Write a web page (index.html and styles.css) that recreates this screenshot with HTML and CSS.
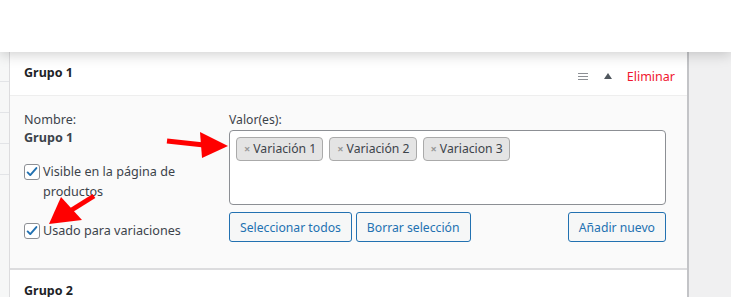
FILE: index.html
```html
<!DOCTYPE html>
<html lang="es">
  <head>
    <meta charset="UTF-8" />
    <meta name="viewport" content="width=device-width, initial-scale=1.0" />
    <title>Atributos</title>
    <link rel="stylesheet" href="styles.css">
  </head>
  <body>
    <div class="topbar"></div>

    <div class="main">
      <div class="side">
        <div class="side-row"></div>
        <div class="side-row"></div>
        <div class="side-row"></div>
        <div class="side-row"></div>
      </div>

      <div class="panel">
        <div class="attr">
          <div class="attr-head">
            <strong>Grupo 1</strong>
            <div class="actions">
              <span class="handle"><i></i><i></i><i></i></span>
              <span class="toggle"></span>
              <a href="#" class="delete">Eliminar</a>
            </div>
          </div>

          <div class="attr-body">
            <div class="col-name">
              <div>Nombre:</div>
              <div class="name">Grupo 1</div>
              <label class="check first">
                <span class="box"><svg viewBox="0 0 16 16" width="14" height="14"><path d="M3 8.5l3 3 7-8" fill="none" stroke="#2271b1" stroke-width="2.2" stroke-linecap="round" stroke-linejoin="round"/></svg></span>
                <span>Visible en la página de productos</span>
              </label>
              <label class="check second">
                <span class="box"><svg viewBox="0 0 16 16" width="14" height="14"><path d="M3 8.5l3 3 7-8" fill="none" stroke="#2271b1" stroke-width="2.2" stroke-linecap="round" stroke-linejoin="round"/></svg></span>
                <span>Usado para variaciones</span>
              </label>
            </div>

            <div class="col-values">
              <div>Valor(es):</div>
              <div class="values">
                <span class="tag"><b>×</b>Variación 1</span>
                <span class="tag"><b>×</b>Variación 2</span>
                <span class="tag"><b>×</b>Variacion 3</span>
              </div>
              <div class="buttons">
                <button>Seleccionar todos</button>
                <button>Borrar selección</button>
                <button class="add">Añadir nuevo</button>
              </div>
            </div>
          </div>
        </div>

        <div class="attr">
          <div class="attr-head">
            <strong>Grupo 2</strong>
          </div>
        </div>
      </div>
    </div>

    <svg class="arrows" width="731" height="297" viewBox="0 0 731 297">
      <line x1="167" y1="141" x2="204" y2="145" stroke="#f00" stroke-width="5" />
      <polygon points="200,132 228,146 202,158" fill="#f00" />
      <line x1="94" y1="196" x2="70" y2="211" stroke="#f00" stroke-width="5" />
      <polygon points="61,197 82,220 49,224" fill="#f00" />
    </svg>
  </body>
</html>
```

FILE: styles.css
```css
body {
  margin: 0;
  background: #f0f0f1;
  font-family: "Noto Sans", "Open Sans", sans-serif;
  font-size: 12.2px;
  color: #3c434a;
  position: relative;
  height: 297px;
  overflow: hidden;
}
.topbar {
  height: 52px;
  background: #fff;
  box-shadow: 0 3px 12px rgba(0, 0, 0, 0.18);
  position: relative;
  z-index: 2;
}
.main {
  display: flex;
}
.side {
  width: 9px;
  background: #f6f7f7;
}
.side-row {
  height: 30px;
  border-bottom: 1px solid #e2e4e7;
}
.side-row:first-child {
  height: 29px;
}
.panel {
  width: 677px;
  background: #fff;
  border-left: 1px solid #dcdcde;
  border-right: 2px solid #c3c4c7;
}
.attr + .attr {
  border-top: 2px solid #dcdcde;
}
.attr-head {
  height: 43px;
  display: flex;
  align-items: center;
  justify-content: space-between;
  padding: 0 12px 0 14px;
  border-bottom: 1px solid #eee;
}
.attr-head strong {
  color: #1d2327;
  font-size: 12.5px;
  margin-top: -3px;
}
.attr + .attr .attr-head {
  height: 40px;
  border-bottom: 0;
}
.attr + .attr .attr-head strong {
  margin-top: 0;
}
.actions {
  display: flex;
  align-items: center;
  margin-top: 6px;
}
.handle {
  display: flex;
  flex-direction: column;
  gap: 2px;
  width: 10px;
  margin-right: 16px;
}
.handle i {
  height: 1px;
  background: #8c8f94;
}
.toggle {
  width: 0;
  height: 0;
  border-left: 4px solid transparent;
  border-right: 4px solid transparent;
  border-bottom: 6px solid #50575e;
  margin-right: 15px;
  margin-top: -2px;
}
.delete {
  color: #f0162f;
  text-decoration: none;
  font-size: 12.5px;
}
.attr-body {
  display: flex;
  background: #fafafa;
  padding: 15px 21px 26px 14px;
  line-height: 18px;
}
.col-name {
  width: 205px;
  flex: none;
  font-size: 12.6px;
}
.name {
  font-weight: bold;
}
.check {
  display: flex;
  align-items: flex-start;
  line-height: 20px;
  width: 158px;
}
.check.first {
  margin-top: 15px;
}
.check.second {
  margin-top: 19px;
  width: 200px;
}
.box {
  width: 14px;
  height: 14px;
  border: 1px solid #8c8f94;
  border-radius: 3px;
  background: #fff;
  flex: none;
  margin: 2px 3px 0 0;
  display: flex;
  align-items: center;
  justify-content: center;
}
.box svg {
  width: 14px;
  height: 14px;
}
.col-values {
  flex: 1;
}
.values {
  margin-top: 1px;
  height: 61px;
  border: 1px solid #8c8f94;
  border-radius: 4px;
  background: #fff;
  padding: 6px;
  display: flex;
  align-items: flex-start;
  gap: 6px;
}
.tag {
  height: 22px;
  line-height: 22px;
  border: 1px solid #aaa;
  border-radius: 4px;
  background: #e4e4e4;
  padding: 0 6px 0 7px;
  color: #3c434a;
  font-size: 12.2px;
}
.tag b {
  color: #999;
  font-weight: bold;
  font-size: 11px;
  margin-right: 3px;
}
.buttons {
  display: flex;
  gap: 4px;
  margin-top: 7px;
}
button {
  font-family: inherit;
  font-size: 12.2px;
  color: #2271b1;
  background: #f6f7f7;
  border: 1px solid #2271b1;
  border-radius: 3px;
  height: 30px;
  padding: 0 10px;
}
button.add {
  margin-left: auto;
}
.arrows {
  position: absolute;
  left: 0;
  top: 0;
  z-index: 3;
}
```
